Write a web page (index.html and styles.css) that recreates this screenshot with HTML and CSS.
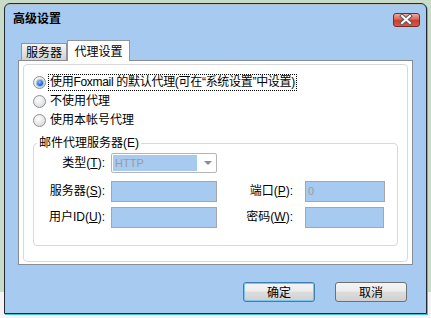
FILE: index.html
```html
<!DOCTYPE html>
<html lang="zh-CN">
<head>
  <meta charset="UTF-8">
  <title>高级设置</title>
  <link rel="stylesheet" href="styles.css">
</head>
<body>
  <div class="dialog">
    <div class="titlebar">
      <span class="title">高级设置</span>
      <span class="close">
        <svg width="25" height="12" viewBox="0 0 25 12">
          <path d="M8 2 L16 9 M16 2 L8 9" stroke="#5a5a5a" stroke-width="4" stroke-linecap="square"/>
          <path d="M8 2 L16 9 M16 2 L8 9" stroke="#ffffff" stroke-width="2" stroke-linecap="square"/>
        </svg>
      </span>
    </div>

    <div class="tabs">
      <div class="tab">服务器</div>
      <div class="tab active">代理设置</div>
    </div>

    <div class="panel">
      <div class="frame">
        <div class="radio"><span class="dot checked"></span><span class="label focus">使用Foxmail 的默认代理(可在“系统设置”中设置)</span></div>
        <div class="radio"><span class="dot"></span><span class="label">不使用代理</span></div>
        <div class="radio"><span class="dot"></span><span class="label">使用本帐号代理</span></div>

        <fieldset class="group">
          <legend>邮件代理服务器(E)</legend>
          <div class="form">
            <label class="col1">类型(<u>T</u>):</label>
            <div class="combo"><span class="combo-value">HTTP</span><span class="combo-arrow"></span></div>
            <span></span>
            <span></span>

            <label class="col1">服务器(<u>S</u>):</label>
            <div class="field"></div>
            <label class="col3">端口(<u>P</u>):</label>
            <div class="field">0</div>

            <label class="col1">用户ID(<u>U</u>):</label>
            <div class="field"></div>
            <label class="col3">密码(<u>W</u>):</label>
            <div class="field short"></div>
          </div>
        </fieldset>
      </div>
    </div>

    <div class="buttons">
      <button class="btn default">确定</button>
      <button class="btn">取消</button>
    </div>
  </div>
</body>
</html>
```

FILE: styles.css
```css
/* Advanced settings dialog */

html,
body {
  margin: 0;
  padding: 0;
}

body {
  width: 431px;
  height: 318px;
  overflow: hidden;
  font-family: "Liberation Sans", "Noto Sans CJK SC", sans-serif;
  font-size: 12px;
  color: #000;
  background: linear-gradient(to bottom, #c8dcc8 0, #c8dcc8 292px, #f4f4f4 292px);
}

.dialog {
  margin: 3px 0 0 4px;
  width: 423px;
  height: 311px;
  box-sizing: border-box;
  border: 1px solid #1f2a35;
  border-radius: 6px 6px 0 0;
  background-color: #a6caf0;
  box-shadow: inset 0 1px 0 #b4bcc6, 1px 1px 0 #3fc4cf;
  display: flex;
  flex-direction: column;
}

/* Title bar */

.titlebar {
  height: 36px;
  box-sizing: border-box;
  padding: 9px 6px 0 8px;
  display: flex;
  justify-content: space-between;
  align-items: flex-start;
}

.title {
  font-family: "Noto Sans CJK SC", sans-serif;
  font-weight: bold;
  line-height: 14px;
  margin-top: -2px;
}

.close {
  width: 27px;
  height: 14px;
  box-sizing: border-box;
  border: 1px solid #7a2a22;
  border-radius: 3px;
  background: linear-gradient(to bottom, #eeaaa0 0, #dd6a5c 40%, #c8402f 55%, #d8584a 100%);
  display: flex;
}

/* Tabs */

.tabs {
  height: 20px;
  padding-left: 16px;
  display: flex;
  align-items: flex-end;
}

.tab {
  width: 46px;
  height: 17px;
  box-sizing: border-box;
  border: 1px solid #8e959c;
  border-bottom: none;
  background: linear-gradient(to bottom, #f4f4f4, #d2d2d2);
  text-align: center;
  line-height: 16px;
  font-family: "Noto Sans CJK SC", sans-serif;
}

.tab.active {
  width: 63px;
  height: 21px;
  margin-bottom: -1px;
  background: #fff;
  line-height: 20px;
  position: relative;
  z-index: 1;
}

.panel {
  margin: 0 13px;
  height: 205px;
  box-sizing: border-box;
  border: 1px solid #898c95;
  background-color: #fff;
}

.frame {
  margin: 3px 4px 2px;
  height: 198px;
  box-sizing: border-box;
  border: 1px solid #d9d9d9;
  border-radius: 4px;
  padding: 8px 9px 0;
}

/* Radio options */

.radio {
  height: 19px;
  display: flex;
  align-items: center;
}

.dot {
  width: 13px;
  height: 13px;
  box-sizing: border-box;
  border: 1px solid #8d9296;
  border-radius: 50%;
  background: radial-gradient(circle at 40% 35%, #ffffff 0, #e8e8e8 50%, #cfcfcf 100%);
  margin-right: 2px;
  display: flex;
  align-items: center;
  justify-content: center;
}

.dot.checked::after {
  content: "";
  width: 6px;
  height: 6px;
  border-radius: 50%;
  background: radial-gradient(circle at 40% 35%, #8cc4ff, #1a56c8 70%);
  box-shadow: 0 0 0 1px #9cc4e8;
}

.label {
  border: 1px dotted transparent;
  padding: 0 1px;
  line-height: 15px;
}

.label.focus {
  border-color: #000;
  letter-spacing: -0.3px;
}

/* Proxy server group */

.group {
  margin: 6px 0 0 0;
  padding: 3px 0 17px 0;
  border: 1px solid #d9d9d9;
  border-radius: 4px;
}

.group legend {
  margin-left: 3px;
  padding: 0 2px;
  line-height: 14px;
}

.form {
  display: grid;
  grid-template-columns: 77px 106px 88px 80px;
  grid-template-rows: 28px 26px 21px;
  align-items: start;
}

.form label {
  line-height: 21px;
  text-align: right;
}

.form .col1 {
  padding-right: 6px;
}

.form .col3 {
  padding-right: 12px;
}

.combo {
  height: 20px;
  box-sizing: border-box;
  border: 1px solid #b5b5b5;
  border-radius: 2px;
  background: #fff;
  padding: 1px;
  display: flex;
  align-items: center;
}

.combo-value {
  width: 84px;
  height: 16px;
  background-color: #a6caf0;
  color: #9c9c9c;
  font-size: 11px;
  line-height: 16px;
  padding-left: 2px;
  box-sizing: border-box;
}

.combo-arrow {
  margin-left: 7px;
  width: 0;
  height: 0;
  border-left: 4px solid transparent;
  border-right: 4px solid transparent;
  border-top: 4px solid #8c8c8c;
}

.field {
  height: 21px;
  box-sizing: border-box;
  border: 1px solid #a3a6aa;
  background-color: #a6caf0;
  color: #9c9c9c;
  font-size: 11px;
  line-height: 19px;
  padding-left: 2px;
}

.field.short {
  width: 79px;
}

/* Buttons */

.buttons {
  margin-top: 17px;
  padding-right: 19px;
  display: flex;
  justify-content: flex-end;
  gap: 20px;
}

.btn {
  width: 72px;
  height: 20px;
  box-sizing: border-box;
  border: 1px solid #707070;
  border-radius: 3px;
  background: linear-gradient(to bottom, #f4f4f4 0, #ececec 45%, #dddddd 50%, #d0d0d0 100%);
  font-family: "Noto Sans CJK SC", sans-serif;
  font-size: 12px;
  line-height: 16px;
  padding: 0;
  color: #000;
}

.btn.default {
  border-color: #3c7fb1;
  box-shadow: inset 0 0 0 1px #7cc4ee;
}
```
